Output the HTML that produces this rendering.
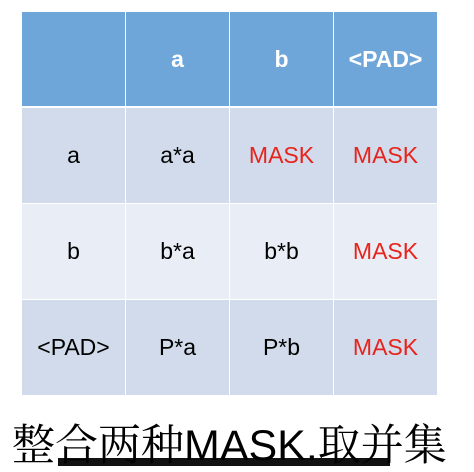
<!DOCTYPE html><html><head><style>
body{margin:0;width:474px;height:466px;background:#fff;position:relative;overflow:hidden;font-family:"Liberation Sans",sans-serif}
.c{position:absolute;display:flex;align-items:center;justify-content:center;font-size:23px;color:#000}
.h{background:#6ea6da;color:#fff;font-weight:bold}
.r1{background:#d1dbeb}.r2{background:#e9eef6}
.m{color:#e8231b}
</style></head><body>
<div class="c h" style="left:22px;top:12px;width:103px;height:94px"></div>
<div class="c h" style="left:126px;top:12px;width:103px;height:94px">a</div>
<div class="c h" style="left:230px;top:12px;width:103px;height:94px">b</div>
<div class="c h" style="left:334px;top:12px;width:103px;height:94px">&lt;PAD&gt;</div>

<div class="c r1" style="left:22px;top:108px;width:103px;height:95px">a</div>
<div class="c r1" style="left:126px;top:108px;width:103px;height:95px">a*a</div>
<div class="c r1 m" style="left:230px;top:108px;width:103px;height:95px">MASK</div>
<div class="c r1 m" style="left:334px;top:108px;width:103px;height:95px">MASK</div>

<div class="c r2" style="left:22px;top:204px;width:103px;height:95px">b</div>
<div class="c r2" style="left:126px;top:204px;width:103px;height:95px">b*a</div>
<div class="c r2" style="left:230px;top:204px;width:103px;height:95px">b*b</div>
<div class="c r2 m" style="left:334px;top:204px;width:103px;height:95px">MASK</div>

<div class="c r1" style="left:22px;top:300px;width:103px;height:95px">&lt;PAD&gt;</div>
<div class="c r1" style="left:126px;top:300px;width:103px;height:95px">P*a</div>
<div class="c r1" style="left:230px;top:300px;width:103px;height:95px">P*b</div>
<div class="c r1 m" style="left:334px;top:300px;width:103px;height:95px">MASK</div>

<div style="position:absolute;left:58px;top:458px;width:332px;height:8px;background:#111"></div>
<div style="position:absolute;left:12px;top:420px;font-size:43px;line-height:52px;white-space:nowrap;font-family:'Liberation Sans','Noto Serif CJK SC',serif;color:#000">整合两种MASK.取并集</div>
</body></html>
